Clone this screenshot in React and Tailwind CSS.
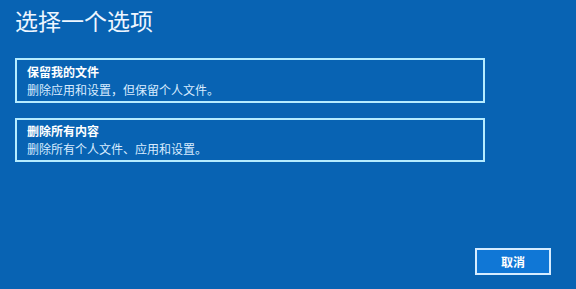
export default function App() {
  return (
    <div className="w-[576px] h-[289px] bg-[#0863b3] text-white flex flex-col overflow-hidden font-['Noto_Sans_CJK_SC',sans-serif]">
      <div className="pl-[15px] pt-[7px] text-[23px] leading-[26px] text-[#eef6ff]">选择一个选项</div>
      <div className="flex flex-col gap-[15px] mt-[25px] pl-[15px]">
        <div className="w-[470px] h-[45px] border-2 border-[#b5ecff] flex flex-col justify-center pl-[10px] text-[12px] leading-[18px]">
          <div className="font-bold text-white">保留我的文件</div>
          <div className="text-[#d8ecff]">删除应用和设置，但保留个人文件。</div>
        </div>
        <div className="w-[470px] h-[44px] border-2 border-[#b5ecff] flex flex-col justify-center pl-[10px] text-[12px] leading-[18px]">
          <div className="font-bold text-white">删除所有内容</div>
          <div className="text-[#d8ecff]">删除所有个人文件、应用和设置。</div>
        </div>
      </div>
      <div className="flex-1" />
      <div className="flex justify-end pr-[25px] pb-[14px]">
        <div className="w-[76px] h-[27px] bg-[#1077d6] border-2 border-[#d6ecff] flex items-center justify-center text-[12px] font-bold text-white">取消</div>
      </div>
    </div>
  );
}
